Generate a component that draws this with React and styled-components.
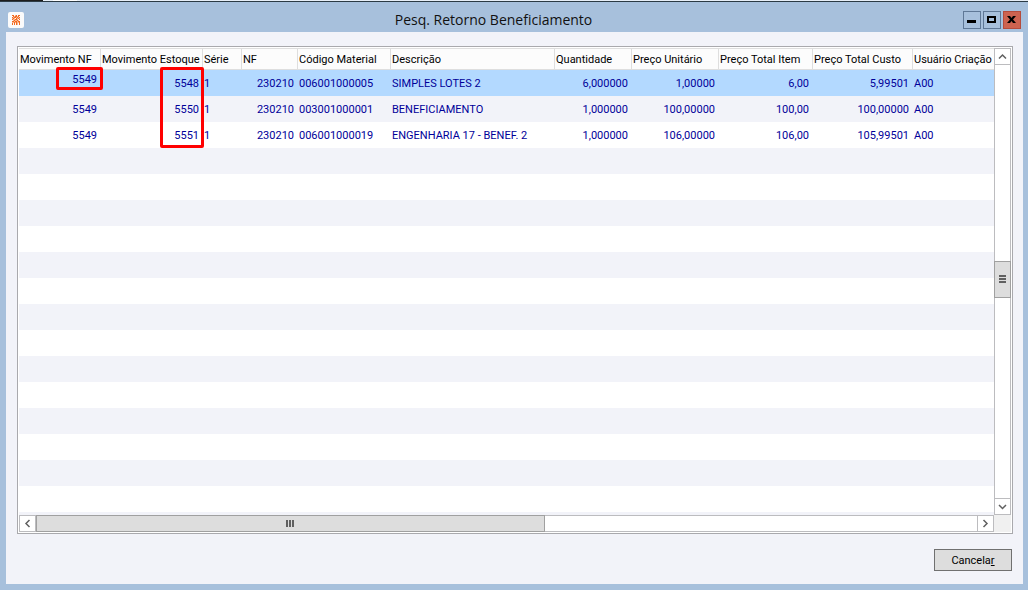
import React from "react";
import styled, { createGlobalStyle } from "styled-components";

const columns = [
  { title: "Movimento NF", width: 82, align: "right" },
  { title: "Movimento Estoque", width: 102, align: "right" },
  { title: "Série", width: 39 },
  { title: "NF", width: 56, align: "right" },
  { title: "Código Material", width: 93 },
  { title: "Descrição" },
  { title: "Quantidade", width: 77, align: "right" },
  { title: "Preço Unitário", width: 87, align: "right" },
  { title: "Preço Total Item", width: 94, align: "right" },
  { title: "Preço Total Custo", width: 100, align: "right" },
  { title: "Usuário Criação", width: 81 },
];

const rows = [
  ["5549", "5548", "1", "230210", "006001000005", "SIMPLES LOTES 2", "6,000000", "1,00000", "6,00", "5,99501", "A00"],
  ["5549", "5550", "1", "230210", "003001000001", "BENEFICIAMENTO", "1,000000", "100,00000", "100,00", "100,00000", "A00"],
  ["5549", "5551", "1", "230210", "006001000019", "ENGENHARIA 17 - BENEF. 2", "1,000000", "106,00000", "106,00", "105,99501", "A00"],
];

// marcações vermelhas sobre a primeira linha
const marks = {
  0: { top: -3, left: 37, width: 47, height: 23 },
  1: { top: -3, left: 59, width: 44, height: 81 },
};

function Arrow({ d }) {
  return (
    <svg width="9" height="9" viewBox="0 0 9 9" fill="none" stroke="#606060" strokeWidth="1.5">
      <path d={d} />
    </svg>
  );
}

function App() {
  return (
    <Desktop>
      <GlobalStyle />
      <Behind>
        <BehindDark />
        <BehindTab />
      </Behind>
      <TitleBar>
        <AppIcon>
          <svg width="8" height="10" viewBox="0 0 8 10">
            <path fill="#fbb48c" d="M0 0h8v10H0z" />
            <path
              fill="#f26a21"
              d="M0 0h2v1H0zM4 0h1v1H4zM6 0h2v1H6zM1 1h1v1H1zM3 1h2v1H3zM6 1h1v1H6zM0 2h1v1H0zM2 2h2v1H2zM5 2h1v1H5zM7 2h1v1H7zM1 3h1v1H1zM4 3h1v1H4zM6 3h1v1H6zM0 4h1v1H0zM3 4h2v1H3zM7 4h1v1H7zM2 5h1v1H2zM5 5h1v1H5zM0 6h2v1H0zM3 6h2v1H3zM6 6h2v1H6zM0 8h1v2H0zM2 7h1v3H2zM4 7h1v3H4zM7 7h1v3H7z"
            />
            <path fill="#fbfbfb" d="M2 0h1v1H2zM5 0h1v1H5zM0 1h1v1H0zM7 1h1v1H7zM0 5h1v1H0zM7 5h1v1H7zM1 8h1v2H1zM3 8h1v2H3zM6 8h1v2H6zM3 3h1v1H3zM6 4h1v1H6z" />
          </svg>
        </AppIcon>
        <Title>Pesq. Retorno Beneficiamento</Title>
        <WindowButtons>
          <WindowButton aria-label="Minimizar">
            <svg width="16" height="16" viewBox="0 0 16 16">
              <path d="M3 8h9v3H3z" />
            </svg>
          </WindowButton>
          <WindowButton aria-label="Maximizar">
            <svg width="16" height="16" viewBox="0 0 16 16">
              <path fillRule="evenodd" d="M3 4h9v7H3zM5 6v3h5V6z" />
            </svg>
          </WindowButton>
          <WindowButton $close aria-label="Fechar">
            <svg width="16" height="16" viewBox="0 0 16 16">
              <path d="M3 4h3l1.500 2L9 4h3L9 7.500 12 11H9L7.500 9 6 11H3l3-3.500z" />
            </svg>
          </WindowButton>
        </WindowButtons>
      </TitleBar>
      <Panel>
        <Grid>
          <Viewport>
            <Table>
              <colgroup>
                {columns.map((col) => (
                  <Col key={col.title} $width={col.width} />
                ))}
              </colgroup>
              <thead>
                <tr>
                  {columns.map((col) => (
                    <HeadCell key={col.title}>{col.title}</HeadCell>
                  ))}
                </tr>
              </thead>
              <tbody>
                {rows.map((row, r) => (
                  <Row key={r} $selected={r === 0}>
                    {row.map((value, c) => (
                      <Cell key={c} $align={columns[c].align} $raised={r === 0 && c === 0}>
                        {value}
                        {r === 0 && marks[c] && <Mark $box={marks[c]} />}
                      </Cell>
                    ))}
                  </Row>
                ))}
              </tbody>
            </Table>
          </Viewport>
          <VerticalBar>
            <ScrollButton aria-label="Para cima">
              <Arrow d="M1 6.500l3.500-3.500L8 6.500" />
            </ScrollButton>
            <Space $grow={196} />
            <VerticalThumb>
              <svg width="7" height="9" viewBox="0 0 7 9" fill="#606060">
                <path d="M0 0h7v2H0zM0 3h7v2H0zM0 6h7v2H0z" />
              </svg>
            </VerticalThumb>
            <Space $grow={200} />
            <ScrollButton aria-label="Para baixo">
              <Arrow d="M1 3l3.500 3.500L8 3" />
            </ScrollButton>
          </VerticalBar>
          <HorizontalBar>
            <ScrollButton aria-label="Para a esquerda">
              <Arrow d="M6.500 1L3 4.500 6.500 8" />
            </ScrollButton>
            <HorizontalThumb>
              <svg width="8" height="7" viewBox="0 0 8 7" fill="#606060">
                <path d="M0 0h2v7H0zM3 0h2v7H3zM6 0h2v7H6z" />
              </svg>
            </HorizontalThumb>
            <Space $grow={433} />
            <ScrollButton aria-label="Para a direita">
              <Arrow d="M2.500 1L6 4.500 2.500 8" />
            </ScrollButton>
          </HorizontalBar>
          <Corner />
        </Grid>
        <Footer>
          <CancelButton>
            Cancela<u>r</u>
          </CancelButton>
        </Footer>
      </Panel>
    </Desktop>
  );
}

const GlobalStyle = createGlobalStyle`
  * {
    box-sizing: border-box;
  }
  body {
    margin: 0;
    font-family: Roboto, sans-serif;
    font-size: 11px;
  }
`;

const Desktop = styled.div`
  display: flex;
  flex-direction: column;
  min-height: 100vh;
  background: #a7c0dc;
`;

const Behind = styled.div`
  display: flex;
  height: 2px;
  background: #e6eef7;
  border-bottom: 1px solid #2b3a44;
`;

const BehindDark = styled.div`
  width: 43px;
  background: #1c1c1c;
`;

const BehindTab = styled.div`
  width: 24px;
  margin-left: 10px;
  background: #ffffff;
`;

const TitleBar = styled.header`
  display: grid;
  grid-template-columns: 1fr auto 1fr;
  align-items: center;
  height: 30px;
  padding: 6px 7px 0 8px;
`;

const AppIcon = styled.span`
  display: flex;
  align-items: center;
  justify-content: center;
  width: 16px;
  height: 16px;
  border-radius: 2px;
  background: #fbfbfb;
`;

const Title = styled.h1`
  margin: 0;
  padding-right: 42px;
  font-family: "Open Sans", sans-serif;
  font-size: 14px;
  line-height: 20px;
  font-weight: 400;
  color: #111111;
`;

const WindowButtons = styled.div`
  display: flex;
  justify-content: flex-end;
  gap: 2px;
`;

const WindowButton = styled.button`
  width: 18px;
  height: 18px;
  padding: 0;
  border: 1px solid ${(props) => (props.$close ? "#b54c3c" : "#5f7896")};
  background: ${(props) => (props.$close ? "#cd6350" : "#a7c0dc")};

  svg {
    display: block;
  }
`;

const Panel = styled.main`
  flex: 1;
  display: flex;
  flex-direction: column;
  gap: 15px;
  margin: 0 5px 6px 6px;
  padding: 14px 10px 13px 11px;
  background: #f2f3f9;
`;

const Grid = styled.section`
  flex: 1;
  display: grid;
  grid-template-columns: 1fr 17px;
  grid-template-rows: 1fr 17px;
  padding: 1px;
  border: 1px solid #a9a9ad;
  background: #ffffff;
`;

/* as linhas vazias continuam as faixas da tabela */
const Viewport = styled.div`
  overflow: hidden;
  background: repeating-linear-gradient(#ffffff 0 26px, #f2f3f9 26px 52px) 0 22px;
`;

const Table = styled.table`
  width: 100%;
  table-layout: fixed;
  border-collapse: separate;
  border-spacing: 0;
`;

const Col = styled.col`
  width: ${(props) => (props.$width ? `${props.$width}px` : "auto")};
`;

const HeadCell = styled.th`
  height: 22px;
  padding: 2px 0 0 1px;
  border: solid #dedede;
  border-width: 1px 1px 1px 0;
  background: #fcfcfc;
  font-size: 11px;
  line-height: 18px;
  font-weight: 400;
  text-align: left;
  white-space: nowrap;
  color: #000000;

  &:last-child {
    border-right: 0;
  }
`;

const Row = styled.tr`
  background: ${(props) => (props.$selected ? "#b3d9ff" : "#f2f3f9")};

  &:nth-child(3) {
    background: #ffffff;
  }
`;

const Cell = styled.td`
  position: relative;
  height: 26px;
  padding: ${(props) => (props.$raised ? "0 4px 6px 1px" : "2px 4px 0 1px")};
  font-size: 11px;
  line-height: 16px;
  text-align: ${(props) => props.$align || "left"};
  white-space: nowrap;
  color: #000099;
`;

const Mark = styled.span`
  position: absolute;
  z-index: 1;
  top: ${(props) => props.$box.top}px;
  left: ${(props) => props.$box.left}px;
  width: ${(props) => props.$box.width}px;
  height: ${(props) => props.$box.height}px;
  border: 3px solid #ff0000;
  border-radius: 2px;
`;

const VerticalBar = styled.div`
  display: flex;
  flex-direction: column;
  border: solid #bcbcbf;
  border-width: 0 1px;
  background: #ffffff;

  button {
    margin: 0 -1px;
  }
`;

const HorizontalBar = styled.div`
  display: flex;
  border: solid #bcbcbf;
  border-width: 1px 0;
  background: #ffffff;

  button {
    margin: -1px 0;
  }
`;

const ScrollButton = styled.button`
  display: flex;
  flex: none;
  align-items: center;
  justify-content: center;
  width: 17px;
  height: 17px;
  padding: 0;
  border: 1px solid #bcbcbf;
  background: #ffffff;
`;

const Space = styled.div`
  flex: ${(props) => props.$grow} 0 0;
`;

const VerticalThumb = styled.div`
  display: flex;
  align-items: center;
  justify-content: center;
  height: 37px;
  margin: 0 -1px;
  border: 1px solid #a0a0a0;
  background: #dddddd;
`;

const HorizontalThumb = styled.div`
  flex: 508 0 0;
  display: flex;
  align-items: center;
  justify-content: center;
  margin: -1px 0;
  border: 1px solid #a0a0a0;
  background: #dddddd;
`;

const Corner = styled.div`
  background: #f0f0f0;
`;

const Footer = styled.footer`
  display: flex;
  justify-content: flex-end;
  padding-right: 1px;
`;

const CancelButton = styled.button`
  width: 78px;
  height: 22px;
  padding: 2px 0 0;
  border: 1px solid #707070;
  background: #dddddd;
  font-family: inherit;
  font-size: 11px;
  line-height: 18px;
  color: #000000;
`;

export default App;
